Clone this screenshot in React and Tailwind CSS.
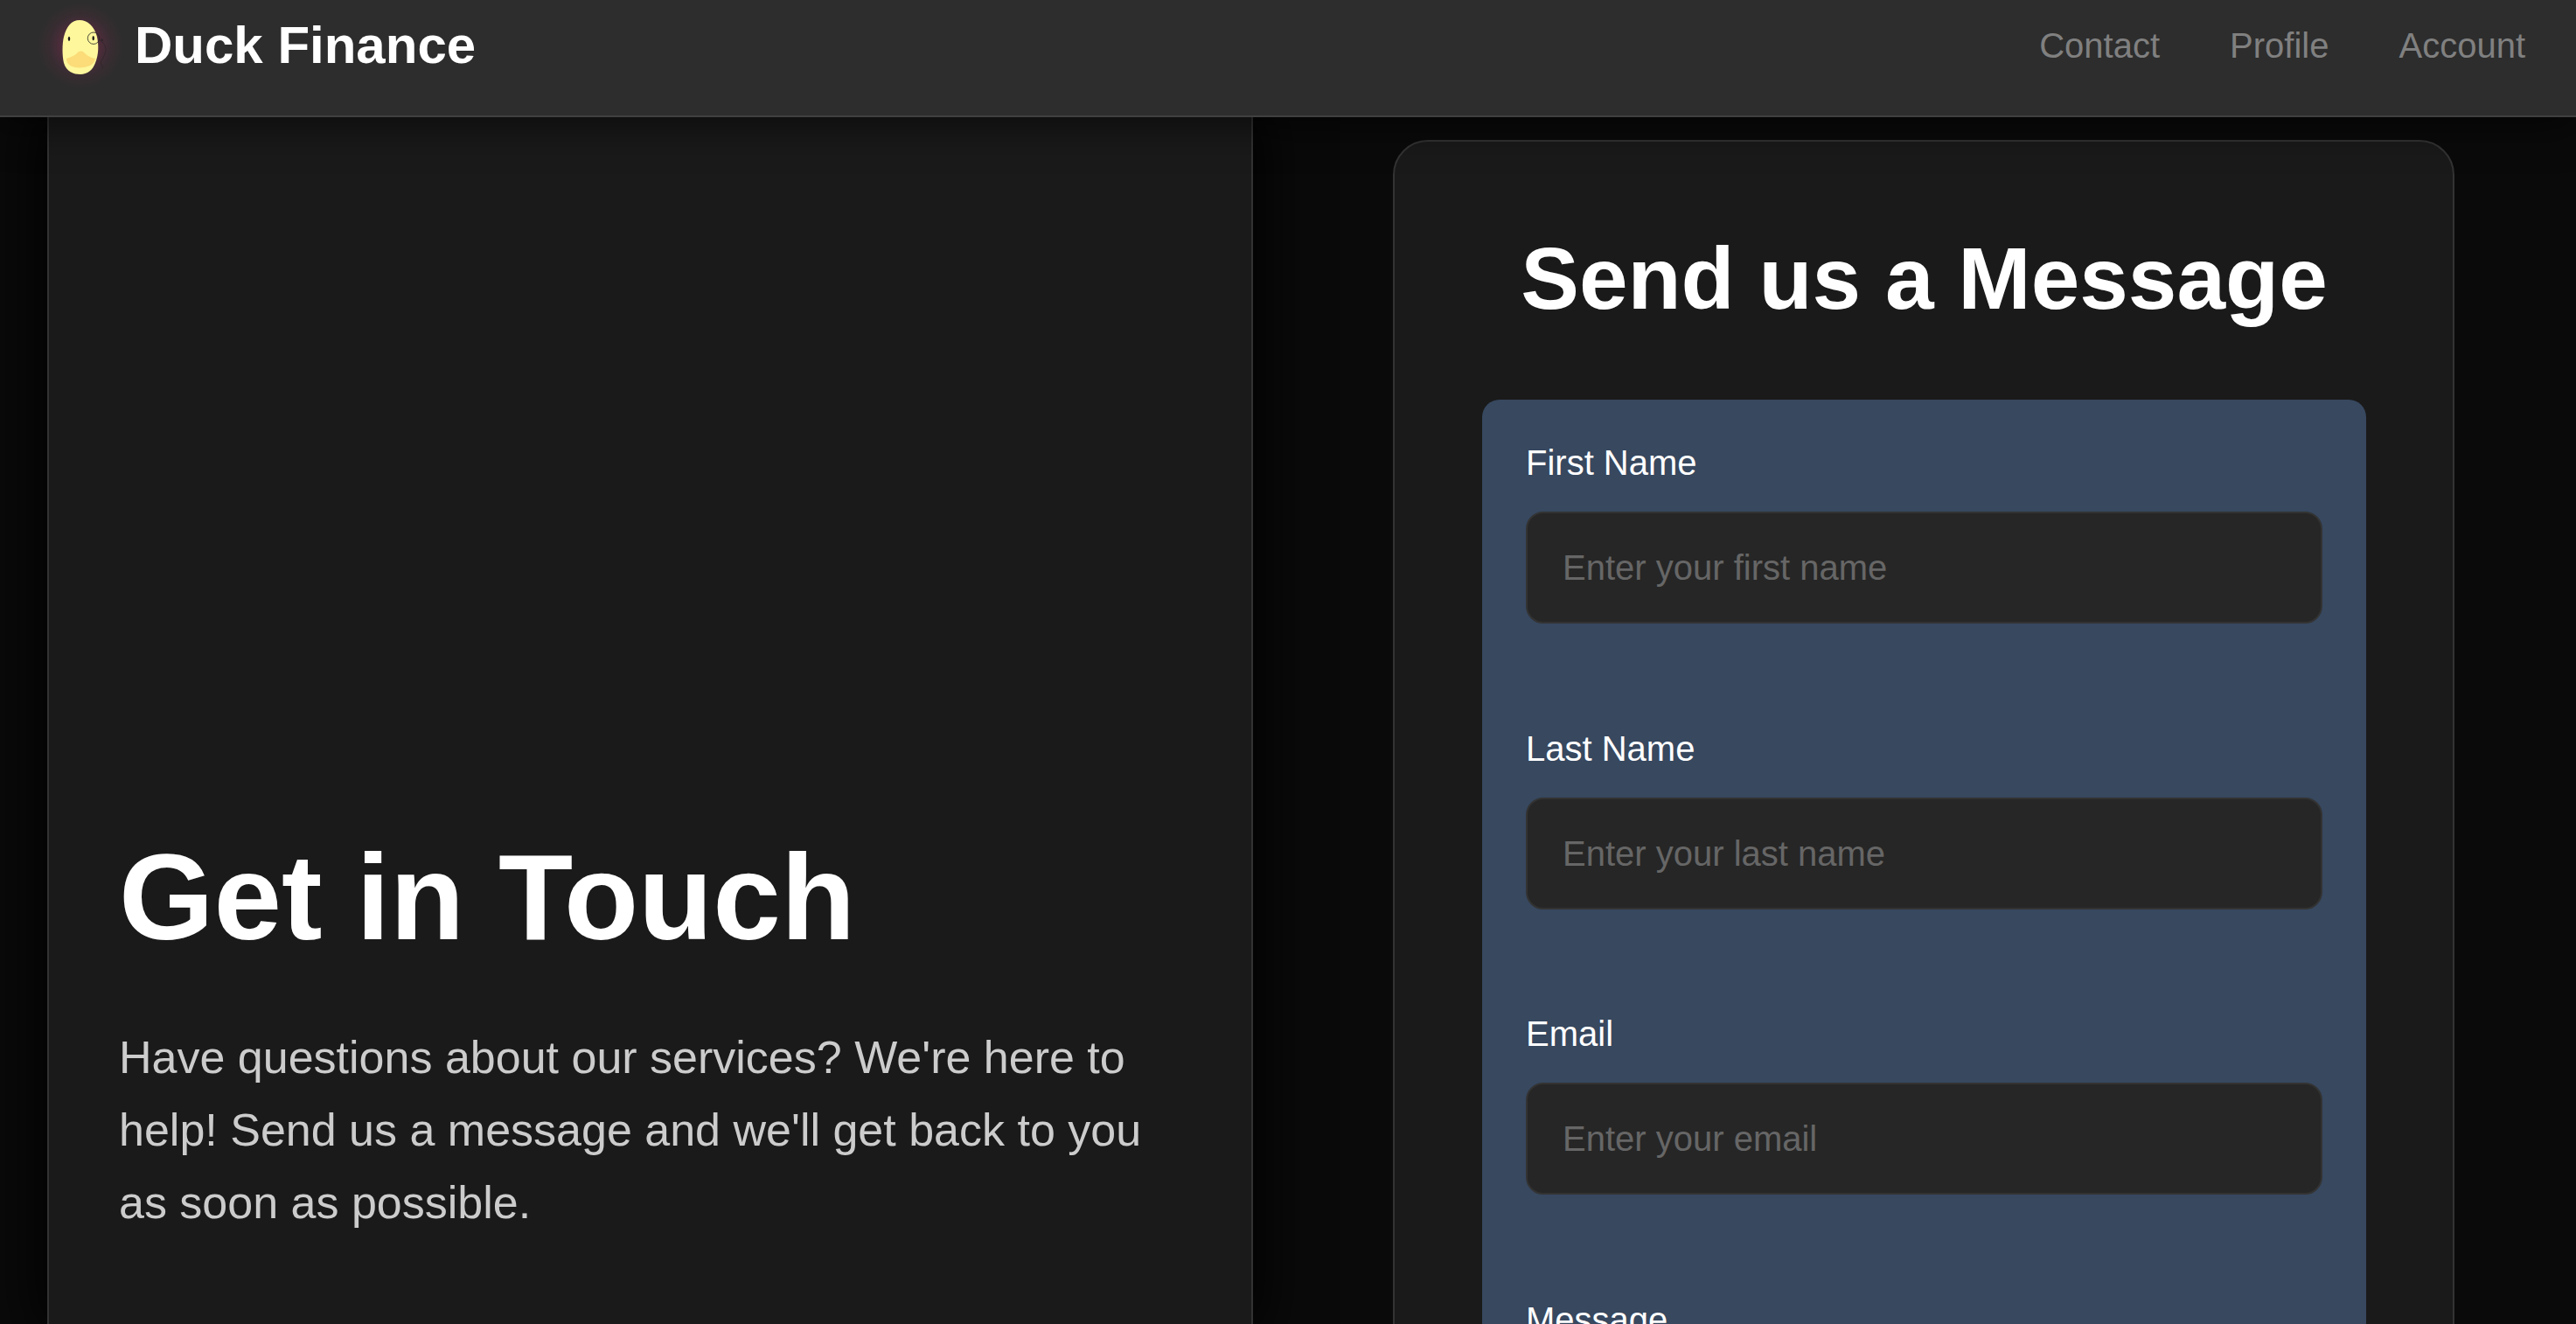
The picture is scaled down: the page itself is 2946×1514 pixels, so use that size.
const fields = [
  ["First Name", "Enter your first name"],
  ["Last Name", "Enter your last name"],
  ["Email", "Enter your email"],
];

function Duck() {
  return (
    <svg width="100" height="100" viewBox="0 0 100 100" fill="none" className="shrink-0">
      <defs>
        <radialGradient id="duckGlow" cx="52" cy="50" r="50" gradientUnits="userSpaceOnUse">
          <stop offset="0.45" stopColor="#5f2c42" stopOpacity="0.65" />
          <stop offset="0.7" stopColor="#5f2c42" stopOpacity="0.22" />
          <stop offset="1" stopColor="#5f2c42" stopOpacity="0" />
        </radialGradient>
      </defs>
      <rect width="100" height="100" fill="url(#duckGlow)" />
      <path d="M51 21C60 21 68 28 71 40C73 50 73 60 69 70C66 78 60 83 52 83C44 83 36 80 33 70C31 62 31 48 33 40C36 28 42 21 51 21Z" fill="#FEF79C" />
      <path d="M36 65C42 63 46 61 48 59C50 56 54 56 56 58C59 61 63 64 69 65C68 71 63 74 56 75C49 76 42 75 39 72C37 70 36 68 36 65Z" fill="#FBDC79" />
      <ellipse cx="39" cy="42.3" rx="1.2" ry="2.6" fill="#1a1a1a" />
      <ellipse cx="66.7" cy="41.7" rx="1.2" ry="2.6" fill="#1a1a1a" />
      <circle cx="67" cy="41.7" r="6.7" stroke="#222222" strokeWidth="0.8" />
      <circle cx="76.3" cy="44" r="1.2" stroke="#222222" strokeWidth="0.8" />
      <path d="M77 46C80 49 81 52 81 56C80 62 76 66 75 70C76 72 77 74 78 76" stroke="#222222" strokeWidth="0.5" />
    </svg>
  );
}

export default function App() {
  return (
    <div className="h-[1514px] overflow-hidden flex flex-col bg-[#0a0a0a] font-['Liberation_Sans',Arial,sans-serif]">
      <header className="relative z-10 h-[134px] shrink-0 flex items-start justify-between bg-[#2d2d2d] border-b-2 border-[#404040] shadow-[0_8px_48px_rgba(0,0,0,0.6)] pl-[40px] pr-[58px]">
        <div className="flex items-center gap-[14px] h-[104px]">
          <Duck />
          <span className="text-[60px] leading-none font-bold text-white">Duck Finance</span>
        </div>
        <nav className="flex items-center gap-[80px] h-[104px] text-[40px] text-[#808080]">
          <a>Contact</a>
          <a>Profile</a>
          <a>Account</a>
        </nav>
      </header>
      <main className="flex flex-1 min-h-0">
        <section className="ml-[54px] w-[1379px] shrink-0 bg-[#1a1a1a] border-x-2 border-[#333333] shadow-[0_0_60px_10px_rgba(0,0,0,0.9)] pl-[80px] pr-[70px] pt-[809px]">
          <h1 className="text-[139.5px] leading-[1.2] font-bold text-white">Get in Touch</h1>
          <p className="mt-[58px] text-[52px] leading-[83px] text-[#cccccc]">
            Have questions about our services? We're here to help! Send us a message and we'll get back to you as soon as possible.
          </p>
        </section>
        <section className="flex-1 min-w-0 pl-[160px] pr-[139px] pt-[26px]">
          <div className="h-[1500px] bg-[#1a1a1a] border-2 border-[#333333] rounded-[40px] pl-[100px] pr-[99px] pt-[96px]">
            <h2 className="text-[100px] leading-[1.2] font-bold text-white text-center">Send us a Message</h2>
            <div className="mt-[79px] h-[1200px] bg-[#37485f] rounded-[20px] px-[50px] pt-[49px]">
              {fields.map(([label, placeholder]) => (
                <div key={label} className="mb-[119.5px]">
                  <label className="block text-[40px] leading-[46px] text-white mb-[33px]">{label}</label>
                  <div className="h-[128px] flex items-center bg-[#262626] border-2 border-[#333333] rounded-[20px] pl-[40px] text-[40px] text-[#666666]">
                    {placeholder}
                  </div>
                </div>
              ))}
              <label className="block text-[40px] leading-[46px] text-white">Message</label>
            </div>
          </div>
        </section>
      </main>
    </div>
  );
}
